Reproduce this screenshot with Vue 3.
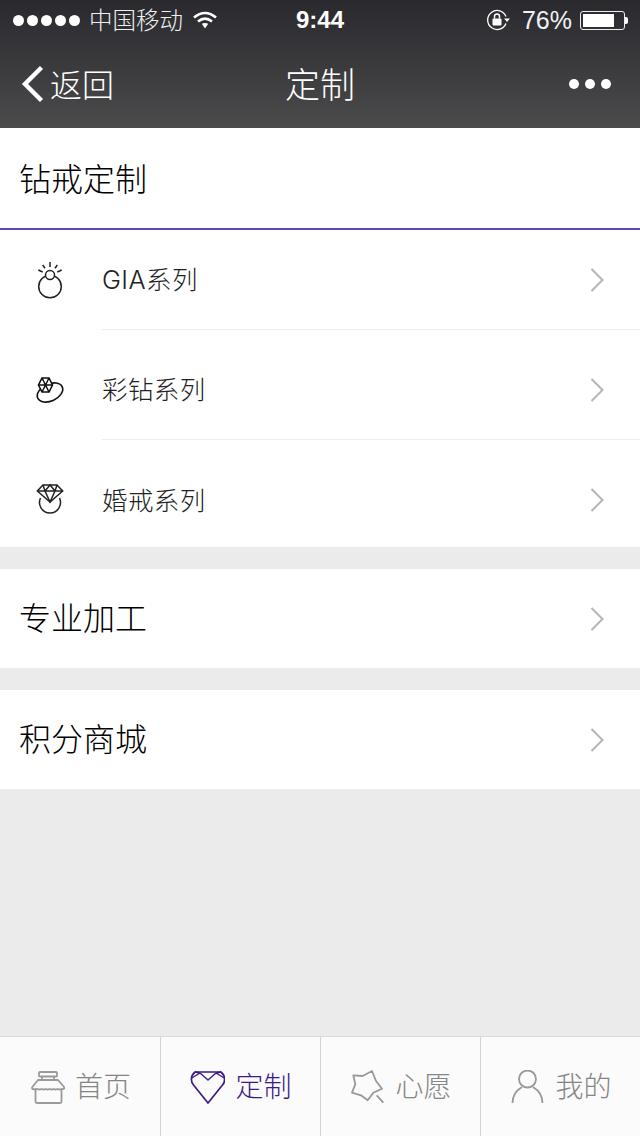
<script setup>
const subs = [
  { label: 'GIA系列', icon: 'gia' },
  { label: '彩钻系列', icon: 'color' },
  { label: '婚戒系列', icon: 'wed' }
]
const tabs = [
  { label: '首页', icon: 'home' },
  { label: '定制', icon: 'heart', active: true },
  { label: '心愿', icon: 'star' },
  { label: '我的', icon: 'user' }
]
</script>

<template>
  <div class="page">
    <header class="header">
      <div class="status">
        <div class="status-left">
          <span class="dots"><i v-for="n in 5" :key="n"></i></span>
          <span class="carrier">中国移动</span>
          <svg class="wifi" width="26" height="20" viewBox="0 0 26 20" fill="none" stroke="#fff" stroke-width="2.6">
            <path d="M2 7.500C9 1.500 17 1.500 24 7.500" />
            <path d="M6 11.500C10.500 7.800 15.500 7.800 20 11.500" />
            <path d="M9.800 13.800L13 18.500L16.200 13.800C14.500 12.800 11.500 12.800 9.800 13.800Z" fill="#fff" stroke="none" />
          </svg>
        </div>
        <span class="time">9:44</span>
        <div class="status-right">
          <svg class="lock" width="24" height="22" viewBox="0 0 24 22" fill="none">
            <path d="M20 7.500A9.500 9.500 0 1 0 20 14.500" stroke="#fff" stroke-width="1.300" />
            <path d="M18 9.500H24L21 13Z" fill="#fff" />
            <rect x="6.500" y="9.500" width="9" height="7" rx="1" fill="#fff" />
            <path d="M8.500 9.500V7.500A2.500 2.500 0 0 1 13.500 7.500V9.500" stroke="#fff" stroke-width="1.500" />
          </svg>
          <span class="pct">76%</span>
          <span class="battery"><span class="battery-fill"></span></span>
          <span class="battery-tip"></span>
        </div>
      </div>
      <nav class="nav">
        <div class="back">
          <svg width="24" height="38" viewBox="0 0 24 38" fill="none" stroke="#fff" stroke-width="4.400">
            <path d="M20.500 2.500L4 19L20.500 35.500" />
          </svg>
          <span class="back-text">返回</span>
        </div>
        <h1 class="title">定制</h1>
        <div class="more"><i></i><i></i><i></i></div>
      </nav>
    </header>

    <main class="main">
      <section class="card">
        <div class="card-title">钻戒定制</div>
        <div class="sub-row" v-for="s in subs" :key="s.label">
          <div class="sub-icon">
            <svg v-if="s.icon === 'gia'" width="36" height="40" viewBox="0 0 36 40" fill="none" stroke="#222" stroke-width="1.500">
              <circle cx="18" cy="26.500" r="11.300" />
              <circle cx="18" cy="15" r="4.500" fill="#fff" />
              <path d="M18 2V7M10.700 5L13 8.300M25.300 5L23 8.300M6.300 10L10.700 12M29.700 10L25.300 12" />
            </svg>
            <svg v-else-if="s.icon === 'color'" width="36" height="40" viewBox="0 0 36 40" fill="none" stroke="#111" stroke-width="1.600">
              <ellipse cx="18" cy="22.500" rx="13.500" ry="8.500" transform="rotate(-25 18 22.500)" />
              <path d="M10 8H17L20.500 15L17 22H10L6.500 15Z" fill="#fff" />
              <path d="M10 8L17 22M17 8L10 22M6.500 15H20.500" stroke-width="1.500" />
            </svg>
            <svg v-else width="36" height="40" viewBox="0 0 36 40" fill="none" stroke="#222" stroke-width="1.500">
              <path d="M8.500 18A10.500 10.500 0 1 0 27.500 18" />
              <path d="M11 5H25L30.700 11L18 22L5.300 11Z" fill="#fff" />
              <path d="M5.300 11H30.700M11 5L13 11L18 22L23 11L25 5M13 11L18 5L23 11" />
            </svg>
          </div>
          <div class="sub-body">
            <span class="sub-label">{{ s.label }}</span>
            <svg class="chev" width="16" height="26" viewBox="0 0 16 26" fill="none" stroke="#b4b4b8" stroke-width="2">
              <path d="M2.500 2L13.500 13L2.500 24" />
            </svg>
          </div>
        </div>
      </section>

      <section class="card link-row">
        <span class="link-label">专业加工</span>
        <svg class="chev" width="16" height="26" viewBox="0 0 16 26" fill="none" stroke="#b4b4b8" stroke-width="2">
          <path d="M2.500 2L13.500 13L2.500 24" />
        </svg>
      </section>
      <section class="card link-row">
        <span class="link-label">积分商城</span>
        <svg class="chev" width="16" height="26" viewBox="0 0 16 26" fill="none" stroke="#b4b4b8" stroke-width="2">
          <path d="M2.500 2L13.500 13L2.500 24" />
        </svg>
      </section>
    </main>

    <footer class="tabbar">
      <div class="tab" v-for="t in tabs" :key="t.label" :class="{ active: t.active }">
        <svg v-if="t.icon === 'home'" width="36" height="34" viewBox="0 0 36 34" fill="none" stroke="#9a9a9a" stroke-width="1.800" stroke-linejoin="round">
          <rect x="10" y="2" width="18" height="4.500" rx="1" />
          <path d="M13 6.500V10M25 6.500V10" />
          <path d="M6.500 19.500V31.500Q6.500 33 8 33H31Q32.500 33 32.500 31.500V19.500" />
          <path d="M9 10H29L35.500 17.500Q35 19.500 32.500 19Q30.500 20 28.500 19Q26.500 20 24.500 19Q22.500 20 20.500 19Q18.500 20 16.500 19Q14.500 20 12.500 19Q10.500 20 8.500 19Q6 19.500 3.500 19Q3 18.500 3 17.500Z" />
        </svg>
        <svg v-else-if="t.icon === 'heart'" width="36" height="34" viewBox="0 0 36 34" fill="none" stroke="#3d1a86" stroke-width="1.700" stroke-linejoin="round">
          <path d="M6 2H32Q36 5.500 35.500 10Q35.500 13 33.500 15L19 33L4.500 15Q2.500 13 2.500 10Q2 5.500 6 2Z" />
          <path d="M2.800 8L11 3L19 10L27 3L35.200 8M6 2L11 3M32 2L27 3" stroke-width="1.400" />
        </svg>
        <svg v-else-if="t.icon === 'star'" width="36" height="34" viewBox="0 0 36 34" fill="none" stroke="#999" stroke-width="1.800" stroke-linejoin="round">
          <path d="M4.300 5.300L13.700 6L23 1L27 11L33 18.700L24.300 22.700L18.700 30.300L12 25.300L3 22.700L6.300 14.300Z" />
          <path d="M27.700 25.300L34.300 32.700" />
        </svg>
        <svg v-else width="36" height="34" viewBox="0 0 36 34" fill="none" stroke="#999" stroke-width="1.800">
          <circle cx="18.500" cy="9" r="8.500" />
          <path d="M3.500 33C3.500 25 8 20 13 17M33.500 33C33.500 25 29 20 24 17" />
        </svg>
        <span class="tab-label">{{ t.label }}</span>
      </div>
    </footer>
  </div>
</template>

<style>
html, body { margin: 0; padding: 0; }
</style>

<style scoped>
.page {
  width: 640px;
  height: 1136px;
  display: flex;
  flex-direction: column;
  background: #ebebeb;
  font-family: "Liberation Sans", "Noto Sans CJK SC", sans-serif;
  font-weight: 300;
  overflow: hidden;
}
.header {
  height: 128px;
  flex: none;
  background: linear-gradient(180deg, #29292e 0%, #4b4b4c 100%);
  color: #fff;
}
.status {
  height: 40px;
  padding: 0 12px 0 13px;
  display: flex;
  align-items: center;
  justify-content: space-between;
  position: relative;
}
.status-left, .status-right { display: flex; align-items: center; }
.dots { display: flex; gap: 3px; }
.dots i { width: 11px; height: 11px; border-radius: 50%; background: #fff; display: block; }
.carrier { font-size: 23.500px; margin: 2px 0 0 9px; line-height: 40px; color: #f0f0f0; }
.wifi { margin-left: 9px; }
.time {
  position: absolute;
  left: 296px;
  top: 0;
  font: 700 24px/40px "Liberation Sans", sans-serif;
}
.lock { margin-right: 12px; }
.pct { font: 25px/40px "Liberation Sans", sans-serif; margin-right: 8px; color: #f2f2f2; }
.battery {
  width: 39px;
  height: 13px;
  border: 1px solid #eee;
  border-radius: 3px;
  padding: 2px;
  display: block;
}
.battery-fill { display: block; width: 31px; height: 13px; background: #fff; }
.battery-tip { width: 3px; height: 7px; background: #fff; border-radius: 0 2px 2px 0; }
.nav {
  height: 88px;
  position: relative;
  display: flex;
  align-items: center;
  justify-content: space-between;
  padding: 0 29px 0 21px;
}
.back { display: flex; align-items: center; gap: 5px; }
.back-text { font-size: 32px; line-height: 1; margin-top: 3px; }
.title {
  position: absolute;
  left: 0;
  right: 0;
  top: 0;
  height: 91px;
  line-height: 91px;
  margin: 0;
  text-align: center;
  font-size: 35px;
  font-weight: 300;
}
.more { display: flex; gap: 6px; }
.more i { width: 10px; height: 10px; border-radius: 50%; background: #fff; display: block; }
.main { flex: 1; }
.card { background: #fff; }
.card-title {
  height: 97px;
  padding: 3px 0 0 19px;
  border-bottom: 2px solid #5f46c0;
  font-size: 32px;
  line-height: 98px;
  color: #000;
}
.sub-row { display: flex; height: 110px; }
.sub-row:nth-child(2) { height: 100px; }
.sub-row:last-child { height: 107px; }
.sub-icon {
  width: 102px;
  flex: none;
  padding-left: 32px;
  box-sizing: border-box;
  display: flex;
  align-items: center;
}
.sub-row:not(:nth-child(2)) .sub-icon { padding-top: 10px; }
.sub-row:last-child .sub-icon { padding-top: 13px; }
.sub-body {
  flex: 1;
  display: flex;
  align-items: center;
  justify-content: space-between;
  padding-right: 35px;
  border-bottom: 1px solid #ececec;
}
.sub-row:not(:nth-child(2)) .sub-body { padding-top: 10px; }
.sub-row:last-child .sub-body { padding-top: 13px; border-bottom: 0; }
.sub-label {
  font-family: Inter, "Noto Sans CJK SC", sans-serif;
  font-size: 25.500px;
  letter-spacing: 0.4px;
  line-height: 1;
  margin-top: 1px;
  color: #222;
}
.link-row {
  height: 99px;
  margin-top: 22px;
  display: flex;
  align-items: center;
  justify-content: space-between;
  padding: 0 35px 0 19px;
  color: #000;
}
.link-label { font-size: 32px; line-height: 1; margin-top: 1px; }
.tabbar {
  height: 100px;
  flex: none;
  box-sizing: border-box;
  display: flex;
  background: #fbfbfb;
  border-top: 1px solid #d9d9d9;
}
.tab {
  flex: 0 0 160px;
  box-sizing: border-box;
  display: flex;
  align-items: center;
  justify-content: center;
  gap: 10px;
  color: #858585;
  border-left: 1px solid #d2d2d2;
}
.tab:first-child { border-left: 0; }
.tab-label { font-size: 28px; line-height: 1; margin-top: 2px; }
.tab.active { color: #3d1a86; }
</style>
